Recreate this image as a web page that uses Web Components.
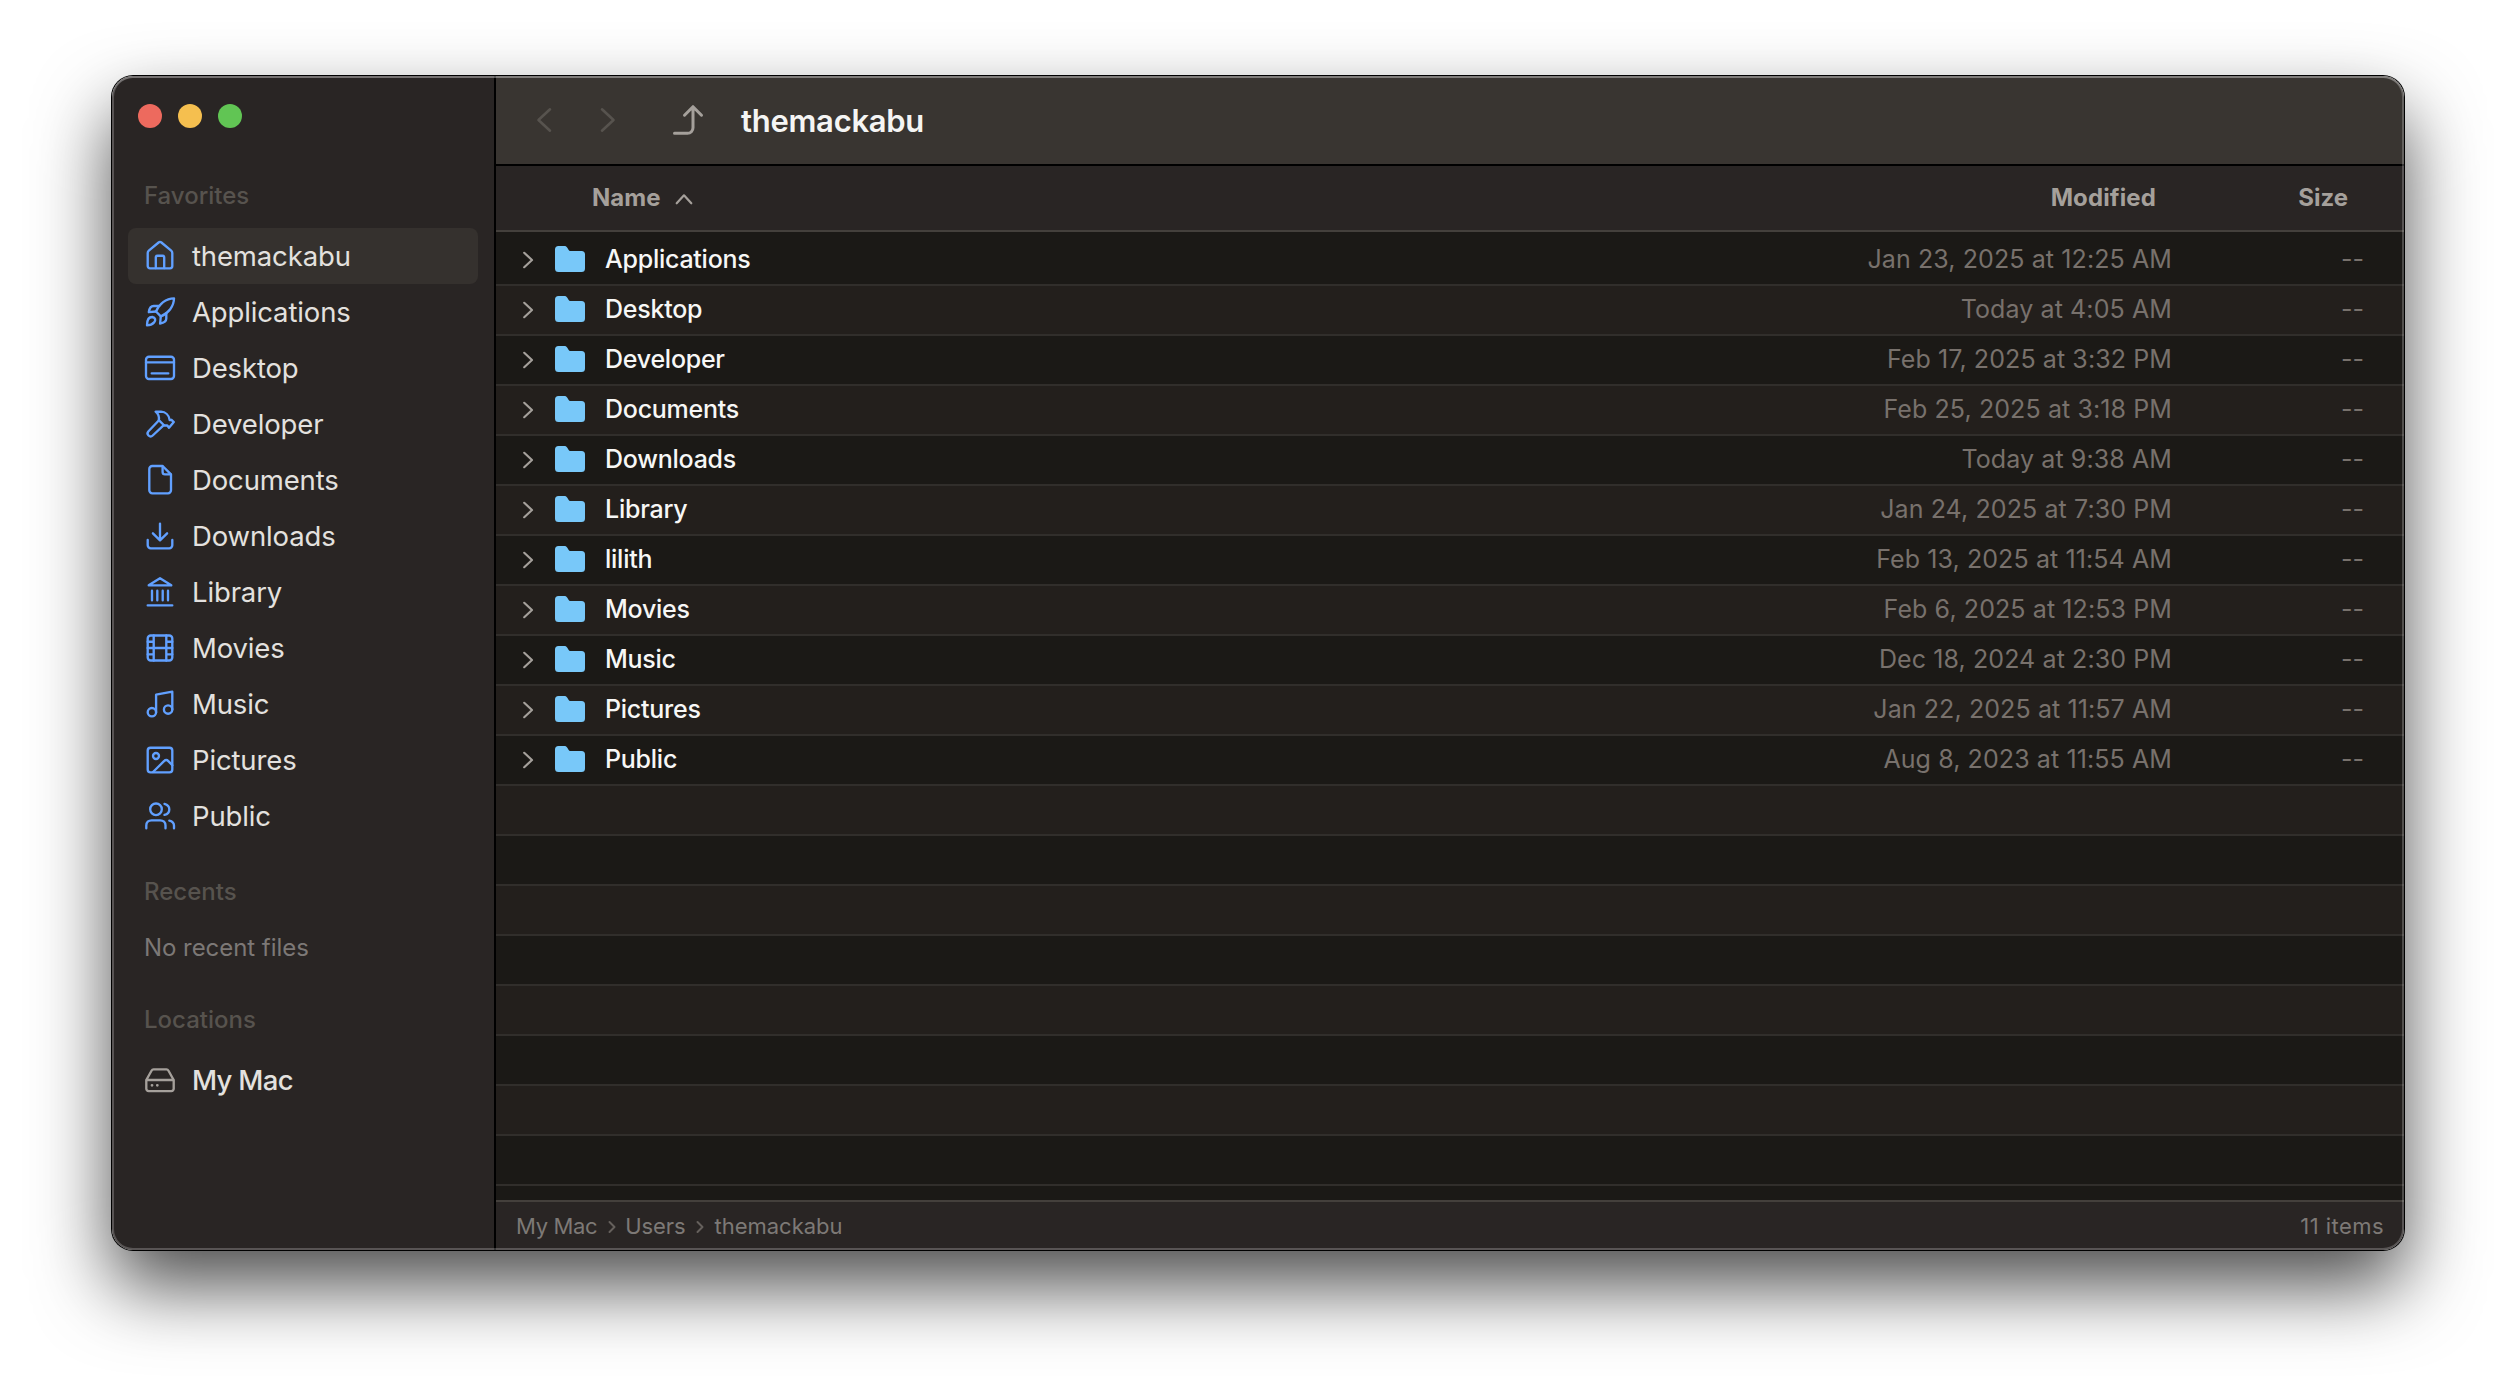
<!DOCTYPE html>
<html lang="en">
<head>
<meta charset="utf-8">
<title>themackabu</title>
<style>
html,body{margin:0;height:100%;background:#fff}
body{font-family:Inter,"Liberation Sans",sans-serif;-webkit-font-smoothing:antialiased}
</style>
</head>
<body>
<finder-app></finder-app>
<script>
const define = (name, css, html) => customElements.define(name, class extends HTMLElement {
  connectedCallback() {
    if (this.shadowRoot) return;
    this.attachShadow({mode: 'open'}).innerHTML =
      `<style>:host{box-sizing:border-box}${css}</style>${typeof html === 'function' ? html(this) : html}`;
  }
});

const ICONS = {
  home: '<path d="M3.7 13c0-.9.4-1.7 1.1-2.3L14.6 2.5c.8-.7 2-.7 2.8 0l9.8 8.2c.7.6 1.1 1.4 1.1 2.3v13a2.3 2.3 0 0 1-2.3 2.3H6A2.3 2.3 0 0 1 3.7 26z"/><path d="M11.8 28v-10.500a1.800 1.800 0 0 1 1.800-1.800h4.800a1.800 1.800 0 0 1 1.800 1.800V28"/>',
  rocket: '<path d="M12 15.500C15 8 22 2.300 30 2.300 30 10.300 24.300 17.300 16.800 20.300z"/><path d="M12 15.500l-7.200.7C5.300 12.500 7 10 9.700 10h5.600"/><path d="M16.800 20.300l-.7 7.200c3.700-.5 6.200-2.200 6.200-4.900V17"/><path d="M3 29.300C3 25 4.500 21 8.300 21c3.200.4 3.700 3.300 1.800 5.400C8.300 28.400 5.500 29.300 3 29.300z"/>',
  desktop: '<rect x="2" y="4.700" width="28" height="22.300" rx="3"/><path d="M2 10.300h28M7.700 21.300h16.600"/>',
  hammer: '<path d="M11.600 3.700H17c4.300.2 8 3.300 8.700 8.300l1.800-.2 2.300 2.300-4.800 5.700-1.700-2.300-3 .0-5.500-5.300C15.500 8.300 14.300 5.900 11.600 3.700z"/><path d="M15 12.300L4.500 23.300a3 3 0 0 0 0 4.200 3 3 0 0 0 4.200 0L19.800 17.200"/>',
  file: '<path d="M18.600 2H8.300a3 3 0 0 0-3 3v21.300a3 3 0 0 0 3 3H24a3 3 0 0 0 3-3V10.400z"/><path d="M18.600 2.300V8a2.400 2.400 0 0 0 2.400 2.400h5.700"/>',
  download: '<path d="M3.700 20v5.300a3 3 0 0 0 3 3h18.600a3 3 0 0 0 3-3V20M16 3.600v16.700M8.900 13.300l7.100 7.100 7.100-7.100"/>',
  library: '<path d="M16 2.300L27.300 9.300H4.700zM8 14.700v9.600M13.300 14.700v9.600M18.700 14.700v9.600M24 14.700v9.600M3.700 29.300h24.600"/>',
  movie: '<rect x="3.700" y="3.500" width="24.600" height="25" rx="3"/><path d="M9.700 3.500v25M22.300 3.500v25M9.700 16h12.600M3.700 9.700h6M3.700 16h6M3.700 22.300h6M22.300 9.700h6M22.300 16h6M22.300 22.300h6"/>',
  music: '<circle cx="7.900" cy="24.200" r="4.200"/><circle cx="24.100" cy="21.500" r="4.200"/><path d="M12.100 24.200V6.700l16.200-3v17.800"/>',
  picture: '<rect x="3.700" y="3.700" width="24.600" height="24.600" rx="2.800"/><circle cx="12" cy="12" r="3"/><path d="M9 28l11-10.800c1.500-1.400 3-1.400 4.300-.1l4 4.100"/>',
  users: '<circle cx="12" cy="9.300" r="5.800"/><path d="M20.500 3.900c2.900.8 4.800 2.900 4.800 5.500s-1.900 4.700-4.800 5.500M2.300 28.300v-2.800c0-3.200 2.200-5.200 5.300-5.200h8.600c3.100 0 5.300 2 5.300 5.200v2.800M25.300 20.600c3 .6 4.700 2.500 4.700 5.200v2.500"/>',
  drive: '<path d="M2.300 16L7.500 6.700c.5-.9 1-1.300 2-1.300h13c1 0 1.500.4 2 1.300L29.700 16v8.700a2.400 2.400 0 0 1-2.400 2.400H4.700a2.400 2.400 0 0 1-2.400-2.400zM2.300 16h27.400"/><path d="M8 21.300h.02M13.300 21.300h.02" stroke-width="2.800"/>',
};

define('ui-icon', ':host{display:block;width:32px;height:32px}svg{display:block}',
  el => `<svg width="32" height="32" viewBox="0 0 32 32" fill="none" stroke="currentColor" stroke-width="2.350" stroke-linecap="round" stroke-linejoin="round">${ICONS[el.getAttribute('name')]}</svg>`);

define('traffic-lights', `
  :host{display:flex;gap:16px}
  i{width:24px;height:24px;border-radius:50%}
  i:nth-of-type(1){background:#ed6a5e}i:nth-of-type(2){background:#f5bf4f}i:nth-of-type(3){background:#61c554}`,
  '<i></i><i></i><i></i>');

define('side-section', `
  :host{display:block}
  h2{margin:0 0 var(--label-gap,18px);padding-left:16px;font:500 24px/28px Inter,sans-serif;color:#57534e}`,
  el => `<h2>${el.getAttribute('label')}</h2><slot></slot>`);

define('side-item', `
  :host{display:flex;align-items:center;gap:16px;height:56px;padding:0 16px;border-radius:8px;
    font-size:27.5px;letter-spacing:-.14px;color:#e3e1df}
  :host([selected]){background:#35312e}
  :host([strong]){font-weight:500;letter-spacing:-.7px}
  ui-icon{color:#61a0ff}
  :host([strong]) ui-icon{color:#a5a09b}`,
  el => `<ui-icon name="${el.getAttribute('icon')}"></ui-icon><span><slot></slot></span>`);

define('side-note', ':host{display:block;padding-left:16px;font-size:24px;line-height:28px;letter-spacing:-.05px;color:#7c7876}', '<slot></slot>');

define('side-bar', `
  :host{display:flex;flex-direction:column;width:384px;padding:28px 16px 0;background:#292524;border-right:2px solid #000}
  traffic-lights{margin:0 0 54px 10px}
  .recents{--label-gap:28px;margin-top:34px}
  .locations{margin-top:44px}`, `
  <traffic-lights></traffic-lights>
  <side-section label="Favorites">
    <side-item icon="home" selected>themackabu</side-item>
    <side-item icon="rocket">Applications</side-item>
    <side-item icon="desktop">Desktop</side-item>
    <side-item icon="hammer">Developer</side-item>
    <side-item icon="file">Documents</side-item>
    <side-item icon="download">Downloads</side-item>
    <side-item icon="library">Library</side-item>
    <side-item icon="movie">Movies</side-item>
    <side-item icon="music">Music</side-item>
    <side-item icon="picture">Pictures</side-item>
    <side-item icon="users">Public</side-item>
  </side-section>
  <side-section label="Recents" class="recents"><side-note>No recent files</side-note></side-section>
  <side-section label="Locations" class="locations"><side-item icon="drive" strong>My Mac</side-item></side-section>`);

define('tool-bar', `
  :host{display:flex;align-items:center;height:90px;padding-left:40px;background:#393531;border-bottom:2px solid #000}
  svg{display:block;fill:none;stroke:#57534e;stroke-width:2.600;stroke-linecap:round;stroke-linejoin:round}
  .fwd{margin-left:48px}
  .up{margin-left:56px;stroke:#a5a09b;stroke-width:3}
  b{margin-left:37px;font-weight:600;font-size:31px;letter-spacing:-.28px;color:#f5f5f4}`, `
  <svg width="16" height="26"><path d="M14 2.300L2.500 13 14 23.700"/></svg>
  <svg class="fwd" width="16" height="26" viewBox="0 0 16 26"><path d="M2 2.300L13.500 13 2 23.700"/></svg>
  <svg class="up" width="32" height="32"><path d="M2.500 29.300H15.500a5.500 5.500 0 0 0 5.500-5.500V2.800M12.500 11.200L21 2.700l8.500 8.500"/></svg>
  <b><slot></slot></b>`);

define('column-head', `
  :host{display:flex;align-items:center;height:66px;padding:0 56px 2px 96px;font-weight:700;font-size:24px;color:#a5a09b;
    background:#292524;border-bottom:2px solid #44403c}
  .name{flex:1;display:flex;align-items:center;gap:15px}
  .size{width:192px;text-align:right}
  .mod{letter-spacing:.12px}
  svg{margin-top:3px;fill:none;stroke:#a5a09b;stroke-width:2.200;stroke-linecap:round;stroke-linejoin:round}`, `
  <span class="name">Name<svg width="18" height="12"><path d="M1.700 10.300L9 2.300l7.300 8"/></svg></span>
  <span class="mod">Modified</span><span class="size">Size</span>`);

define('file-row', `
  :host{display:flex;align-items:center;height:50px;padding:0 40px 0 26px;font-size:25px;border-bottom:2px solid #312e2b;background:#1b1916}
  :host(:nth-child(even)){background:#231f1c}
  svg{display:block;flex:none}
  .folder{margin:-2px 0 0 21px}
  span{margin-top:-2px}
  .name{flex:1;margin-left:20px;font-weight:450;letter-spacing:-.25px;color:#f7f7f6}
  .date,.size{color:#78716c}
  .date{letter-spacing:.1px}
  .size{width:192px;text-align:right}`,
  el => el.hasAttribute('name') ? `
  <svg width="12" height="18" fill="none" stroke="#a5a09b" stroke-width="2.200" stroke-linecap="round" stroke-linejoin="round"><path d="M2.200 1.800L10 9l-7.800 7.200"/></svg>
  <svg class="folder" width="30" height="26"><path fill="#78c8f9" d="M0 3.500A3.500 3.500 0 0 1 3.500 0h5.800c1.400 0 2.300.6 3 1.700l1.200 2.100c.5.800 1.100 1.200 2.100 1.200H26.500A3.500 3.500 0 0 1 30 8.500v14a3.500 3.500 0 0 1-3.500 3.500h-23A3.500 3.500 0 0 1 0 22.500z"/></svg>
  <span class="name">${el.getAttribute('name')}</span><span class="date">${el.getAttribute('date')}</span><span class="size">--</span>` : '');

const FILES = [
  ['Applications', 'Jan 23, 2025 at 12:25 AM'], ['Desktop', 'Today at 4:05 AM'], ['Developer', 'Feb 17, 2025 at 3:32 PM'],
  ['Documents', 'Feb 25, 2025 at 3:18 PM'], ['Downloads', 'Today at 9:38 AM'], ['Library', 'Jan 24, 2025 at 7:30 PM'],
  ['lilith', 'Feb 13, 2025 at 11:54 AM'], ['Movies', 'Feb 6, 2025 at 12:53 PM'], ['Music', 'Dec 18, 2024 at 2:30 PM'],
  ['Pictures', 'Jan 22, 2025 at 11:57 AM'], ['Public', 'Aug 8, 2023 at 11:55 AM'],
];
define('file-list', ':host{display:block;flex:1;min-height:0;overflow:hidden;background:#1b1916;padding-top:4px}',
  () => `<div>${FILES.map(([n, d]) => `<file-row name="${n}" date="${d}"></file-row>`).join('')}${'<file-row></file-row>'.repeat(8)}</div>`);

define('path-bar', `
  :host{display:flex;align-items:center;height:50px;padding:0 20px 1px;font-size:22px;color:#7d7976;background:#292524;border-top:2px solid #44403c}
  svg{margin:3px 10px 0 11px;fill:none;stroke:#65605c;stroke-width:2;stroke-linecap:round;stroke-linejoin:round}
  .root{letter-spacing:-.35px}
  .users{letter-spacing:-.1px;margin-left:-1px}
  .count{margin-left:auto;letter-spacing:.45px}`, `
  <span class="root">My Mac</span><svg width="8" height="14"><path d="M1.500 2l5 5-5 5"/></svg>
  <span class="users">Users</span><svg width="8" height="14"><path d="M1.500 2l5 5-5 5"/></svg>
  <span>themackabu</span><span class="count">11 items</span>`);

define('mac-window', `
  :host{display:flex;position:relative;width:2292px;height:1174px;border-radius:21px;
    box-shadow:0 0 0 1px #000,0 36px 76px rgba(0,0,0,.7)}
  .body{display:flex;flex:1;border-radius:inherit;overflow:hidden}
  :host::after{content:"";position:absolute;inset:0;border-radius:inherit;pointer-events:none;
    box-shadow:inset 0 2px 0 rgba(255,255,255,.18),inset 0 0 0 2px rgba(255,255,255,.22)}`,
  '<div class="body"><slot></slot></div>');

define('finder-app', `
  :host{display:flex;justify-content:center;padding-top:76px;height:1398px;overflow:hidden}
  main{flex:1;display:flex;flex-direction:column;min-width:0}`, `
  <mac-window>
    <side-bar></side-bar>
    <main>
      <tool-bar>themackabu</tool-bar>
      <column-head></column-head>
      <file-list></file-list>
      <path-bar></path-bar>
    </main>
  </mac-window>`);
</script>
</body>
</html>
